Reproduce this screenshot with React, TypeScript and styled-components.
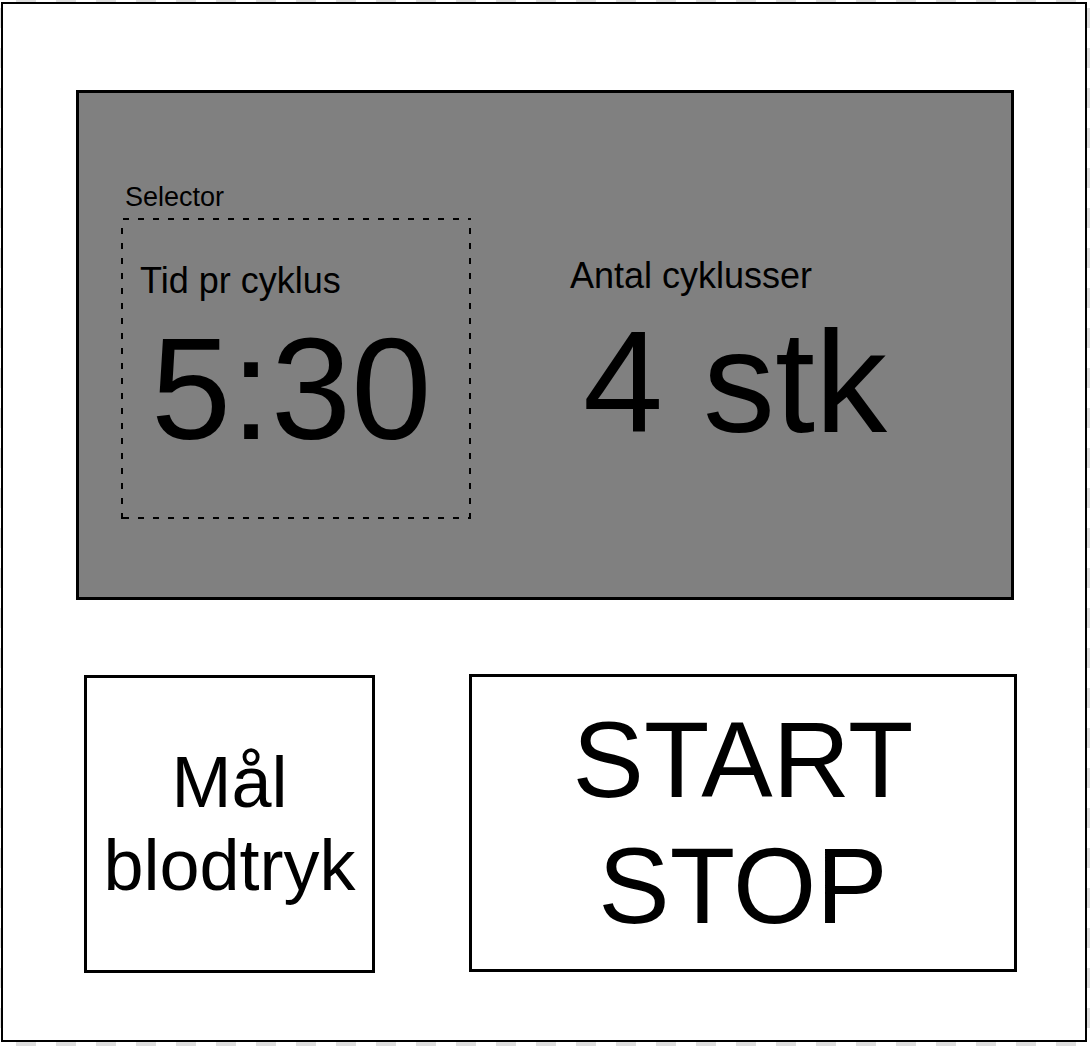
import React from 'react'
import styled, { createGlobalStyle } from 'styled-components'

const GlobalStyle = createGlobalStyle`
  html, body {
    margin: 0;
    padding: 0;
  }
  body {
    font-family: "Liberation Sans", Arial, Helvetica, sans-serif;
    color: #000;
  }
`

const Canvas = styled.div`
  width: 1090px;
  height: 1046px;
  box-sizing: border-box;
  padding: 2px 0 0 1px;
  background: repeating-conic-gradient(#dedede 0 25%, #ffffff 0 50%) 16px 8px / 40px 40px;
`

const Frame = styled.div`
  width: 1086px;
  height: 1040px;
  box-sizing: border-box;
  border: 2px solid #000;
  background: #fff;
  display: flex;
  flex-direction: column;
  padding: 86px 0 0 73px;
`

const Screen = styled.div`
  width: 938px;
  height: 510px;
  box-sizing: border-box;
  border: 3px solid #000;
  background: #808080;
  display: flex;
  align-items: flex-start;
  padding: 91px 0 0 42px;
  gap: 99px;
`

const SelectorGroup = styled.div`
  display: flex;
  flex-direction: column;
`

const SelectorLabel = styled.div`
  font-size: 27px;
  line-height: 27px;
  padding-left: 4px;
  margin-bottom: 7px;
`

// dashed outline: 6px dash / 9px gap, like the drawing tool's dashed stroke
const SelectorBox = styled.div`
  width: 350px;
  height: 301px;
  box-sizing: border-box;
  padding: 45px 0 0 19px;
  display: flex;
  flex-direction: column;
  background:
    repeating-linear-gradient(90deg, #000 0 6px, transparent 6px 15px) 2px 0 / calc(100% - 2px) 2px no-repeat,
    repeating-linear-gradient(90deg, #000 0 6px, transparent 6px 15px) 2px 100% / calc(100% - 2px) 2px no-repeat,
    repeating-linear-gradient(180deg, #000 0 6px, transparent 6px 15px) 0 10px / 2px calc(100% - 10px) no-repeat,
    repeating-linear-gradient(180deg, #000 0 6px, transparent 6px 15px) 100% 10px / 2px calc(100% - 10px) no-repeat;
`

const Setting = styled.div<{ $offset?: number }>`
  display: flex;
  flex-direction: column;
  margin-top: ${p => p.$offset ?? 0}px;
`

const SettingLabel = styled.div`
  font-size: 36px;
  line-height: 36px;
  white-space: nowrap;
`

const SettingValue = styled.div<{ $indent: number; $gap: number }>`
  font-size: 144px;
  line-height: 144px;
  white-space: nowrap;
  padding-left: ${p => p.$indent}px;
  margin-top: ${p => p.$gap}px;
`

const Controls = styled.div`
  display: flex;
  align-items: flex-start;
  margin-top: 74px;
  padding-left: 8px;
  gap: 94px;
`

const ControlButton = styled.button<{ $width: number; $size: number; $line: number; $lift?: number }>`
  width: ${p => p.$width}px;
  height: 298px;
  box-sizing: border-box;
  border: 3px solid #000;
  background: #fff;
  color: #000;
  margin: ${p => p.$lift ?? 0}px 0 0 0;
  padding: 0;
  font-family: inherit;
  font-size: ${p => p.$size}px;
  line-height: ${p => p.$line}px;
  text-align: center;
  display: flex;
  flex-direction: column;
  align-items: center;
  justify-content: center;
`

export default function App() {
  return (
    <>
      <GlobalStyle />
      <Canvas>
        <Frame>
          <Screen>
            <SelectorGroup>
              <SelectorLabel>Selector</SelectorLabel>
              <SelectorBox>
                <SettingLabel>Tid pr cyklus</SettingLabel>
                <SettingValue $indent={11} $gap={19}>5:30</SettingValue>
              </SelectorBox>
            </SelectorGroup>
            <Setting $offset={74}>
              <SettingLabel>Antal cyklusser</SettingLabel>
              <SettingValue $indent={13} $gap={17}>4 stk</SettingValue>
            </Setting>
          </Screen>
          <Controls>
            <ControlButton $width={291} $size={72} $line={83} $lift={1}>
              <span>Mål</span>
              <span>blodtryk</span>
            </ControlButton>
            <ControlButton $width={548} $size={107} $line={126}>
              <span>START</span>
              <span>STOP</span>
            </ControlButton>
          </Controls>
        </Frame>
      </Canvas>
    </>
  )
}
